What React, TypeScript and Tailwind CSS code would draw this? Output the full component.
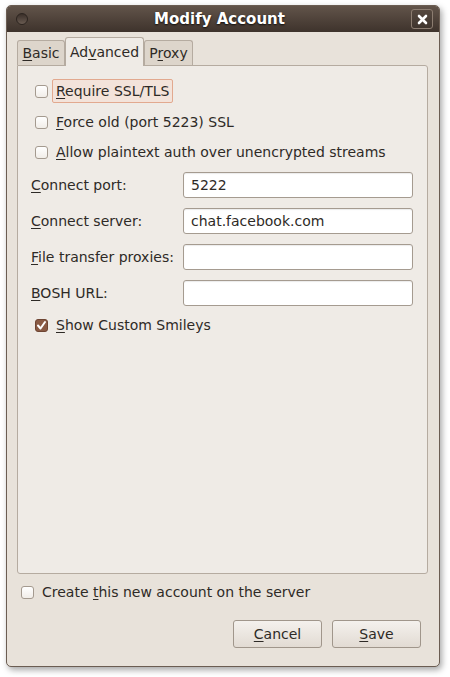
import React from 'react'

function Check({ checked = false }: { checked?: boolean }) {
  if (checked) {
    return (
      <span className="w-[13px] h-[13px] rounded-[3px] bg-[#8a5a44] border border-[#6e4533] flex items-center justify-center shrink-0">
        <svg width="11" height="11" viewBox="0 0 11 11">
          <path d="M2 5.5 L4.5 8.5 L9 2" fill="none" stroke="#fff" strokeWidth="2" strokeLinecap="round" strokeLinejoin="round" />
        </svg>
      </span>
    )
  }
  return (
    <span className="w-[13px] h-[13px] rounded-[3px] bg-gradient-to-b from-[#ffffff] to-[#f1ede8] border border-[#a49a8f] shrink-0" />
  )
}

function U({ c }: { c: string }) {
  return <span className="underline underline-offset-2">{c}</span>
}

function Field({ label, value }: { label: React.ReactNode; value?: string }) {
  return (
    <div className="flex items-center h-[26px]">
      <div className="w-[152px] text-[14px]">{label}</div>
      <div className="w-[230px] h-[26px] bg-white border border-[#a59b90] rounded-[3px] px-[7px] flex items-center text-[14px] shadow-[inset_0_1px_1px_rgba(0,0,0,0.08)]">
        {value}
      </div>
    </div>
  )
}

function Button({ children }: { children: React.ReactNode }) {
  return (
    <div className="w-[89px] h-[28px] rounded-[3px] border border-[#a0968b] bg-gradient-to-b from-[#f4f1ed] to-[#e2dbd3] flex items-center justify-center text-[14px]">
      {children}
    </div>
  )
}

export default function App() {
  return (
    <div className="w-[450px] h-[677px] bg-white pl-[6px] pt-[5px] text-[#2e2a26]" style={{ fontFamily: '"DejaVu Sans", Verdana, sans-serif' }}>
      <div className="w-[434px] h-[662px] rounded-[5px] bg-[#e8e2da] border border-[#6b5d52] flex flex-col shadow-[2px_3px_6px_rgba(0,0,0,0.35)] overflow-hidden">
        <div className="h-[26px] shrink-0 bg-gradient-to-b from-[#62544a] to-[#3e332c] flex items-center px-[9px] relative">
          <span className="w-[12px] h-[12px] rounded-full bg-gradient-to-b from-[#3a2f29] to-[#6a5c52] border border-[#2c241f]" />
          <div className="flex-1 text-center text-white font-bold text-[15px] [text-shadow:0_1px_2px_rgba(0,0,0,0.8)]">Modify Account</div>
          <span className="w-[22px] h-[20px] rounded-[3px] border border-[#8c7d71] bg-gradient-to-b from-[#55483f] to-[#40352e] flex items-center justify-center mr-[-3px]">
            <svg width="11" height="11" viewBox="0 0 11 11">
              <path d="M2 2 L9 9 M9 2 L2 9" stroke="#fff" strokeWidth="2.6" strokeLinecap="round" />
            </svg>
          </span>
        </div>

        <div className="flex-1 flex flex-col px-[10px] pt-[4px]">
          <div className="flex items-end h-[29px] pl-[0px]">
            <div className="h-[25px] w-[48px] border border-[#b5aba0] border-b-0 rounded-t-[3px] bg-[#ddd5cb] flex items-center justify-center text-[14px]">
              <span><U c="B" />asic</span>
            </div>
            <div className="h-[29px] w-[79px] border border-[#b5aba0] border-b-0 rounded-t-[3px] bg-[#efebe6] flex items-center justify-center text-[14px] mb-[-1px] relative z-10">
              <span>Ad<U c="v" />anced</span>
            </div>
            <div className="h-[25px] w-[49px] border border-[#b5aba0] border-b-0 rounded-t-[3px] bg-[#ddd5cb] flex items-center justify-center text-[14px]">
              <span>P<U c="r" />oxy</span>
            </div>
          </div>
          <div className="h-[509px] w-[411px] border border-[#b5aba0] rounded-b-[3px] rounded-tr-[3px] bg-[#efebe6] pl-[13px] pt-[13px] flex flex-col">
            <div className="flex items-center h-[24px] pl-[4px]">
              <Check />
              <span className="ml-[4px] px-[3px] h-[24px] flex items-center border border-[#e2a98f] bg-[#f3e3da] rounded-[2px] text-[14px]">
                <span><U c="R" />equire SSL/TLS</span>
              </span>
            </div>
            <div className="flex items-center h-[24px] pl-[4px] mt-[7px]">
              <Check />
              <span className="ml-[8px] text-[14px]"><U c="F" />orce old (port 5223) SSL</span>
            </div>
            <div className="flex items-center h-[24px] pl-[4px] mt-[6px]">
              <Check />
              <span className="ml-[8px] text-[14px]"><U c="A" />llow plaintext auth over unencrypted streams</span>
            </div>
            <div className="flex flex-col gap-[10px] mt-[8px]">
              <Field label={<span><U c="C" />onnect port:</span>} value="5222" />
              <Field label={<span><U c="C" />onnect server:</span>} value="chat.facebook.com" />
              <Field label={<span><U c="F" />ile transfer proxies:</span>} />
              <Field label={<span><U c="B" />OSH URL:</span>} />
            </div>
            <div className="flex items-center h-[24px] pl-[4px] mt-[7px]">
              <Check checked />
              <span className="ml-[8px] text-[14px]"><U c="S" />how Custom Smileys</span>
            </div>
          </div>

          <div className="flex items-center h-[24px] mt-[6px] pl-[4px]">
            <Check />
            <span className="ml-[8px] text-[14px]">Create <U c="t" />his new account on the server</span>
          </div>

          <div className="flex justify-end gap-[10px] mt-[16px] pr-[8px]">
            <Button><span><U c="C" />ancel</span></Button>
            <Button><span><U c="S" />ave</span></Button>
          </div>
        </div>
      </div>
    </div>
  )
}
